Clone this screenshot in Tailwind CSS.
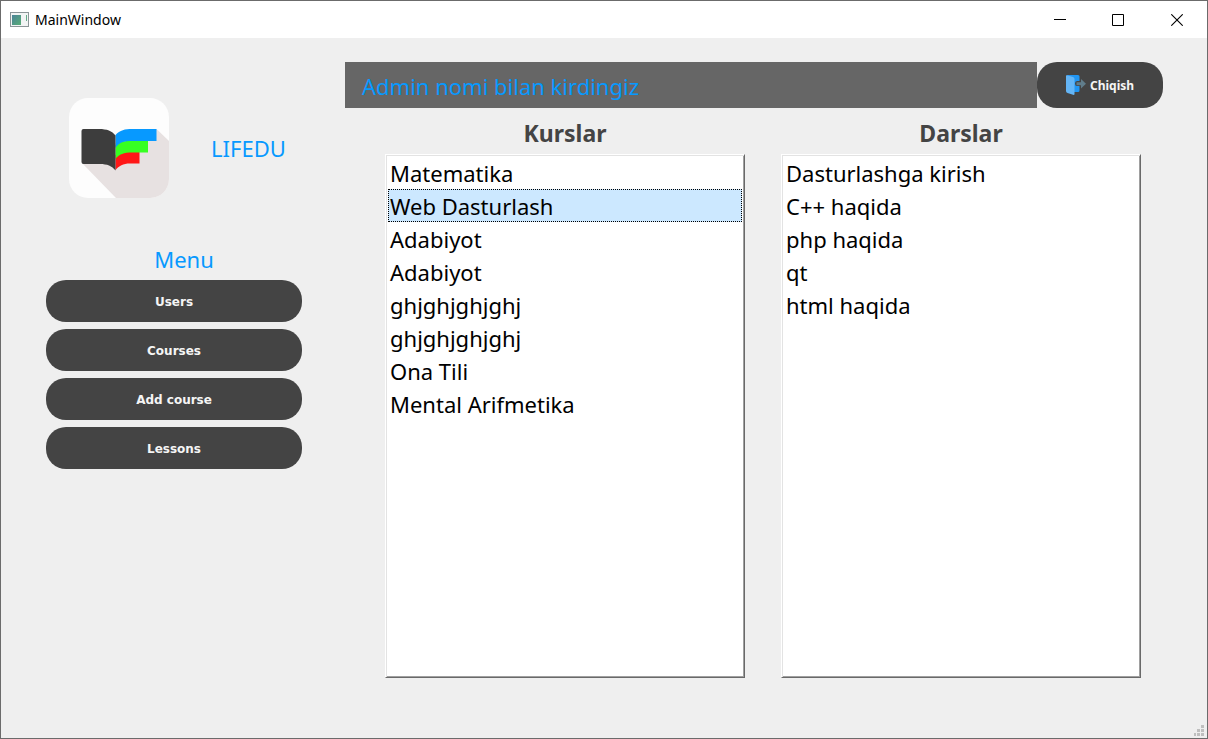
<!DOCTYPE html>
<html lang="uz">
<head>
<meta charset="utf-8">
<title>MainWindow</title>
<script src="https://cdn.jsdelivr.net/npm/@tailwindcss/browser@4"></script>
</head>
<body class="flex min-h-screen flex-col border border-[#6b6b6b] bg-[#efefef] font-['Noto_Sans','Open_Sans',sans-serif] text-black">
<header class="flex h-[37px] items-center bg-white pl-[9px]">
  <svg class="h-4 w-5" viewBox="0 0 20 16" aria-hidden="true">
    <defs><linearGradient id="pane" x1="0" y1="0" x2="1" y2="1"><stop offset="0" stop-color="#4b8398"/><stop offset="1" stop-color="#58ad76"/></linearGradient></defs>
    <rect x=".5" y=".5" width="18" height="14" fill="#f2f4f4" stroke="#8c9598"/>
    <rect x="2" y="3" width="9" height="10" fill="url(#pane)"/>
    <rect x="16" y="3" width="1" height="6" fill="#64aa88"/>
  </svg>
  <h1 class="ml-[5px] flex-1 text-sm">MainWindow</h1>
  <button class="grid h-full w-[58px] place-items-center" aria-label="Minimize"><svg class="size-3" viewBox="0 0 12 12"><path d="M0 5.5H12" stroke="#000"/></svg></button>
  <button class="grid h-full w-[58px] place-items-center" aria-label="Maximize"><svg class="size-3" viewBox="0 0 12 12"><path d="M.5 .5H11.5V11.5H.5Z" fill="none" stroke="#000"/></svg></button>
  <button class="grid h-full w-[60px] place-items-center" aria-label="Close"><svg class="size-3" viewBox="0 0 12 12"><path d="M.3 .3L11.7 11.7M11.7 .3L.3 11.7" stroke="#000" stroke-width="1.1"/></svg></button>
</header>
<div class="flex flex-1 gap-[43px] pt-6 pr-11 pl-[45px]">
  <aside class="w-64 pt-9">
    <div class="flex items-center pl-[23px]">
      <svg class="size-[100px]" viewBox="0 0 100 100" role="img" aria-label="LIFEDU">
        <rect width="100" height="100" rx="19" fill="#fdfdfd"/>
        <path d="M13 65L47 100H81A19 19 0 0 0 100 81V43L87.500 31L47 45Z" fill="#e7e1e1"/>
        <path d="M46.500 57C50 54 55 54 60 54H70.500V65.500H61C54 65.500 50 68 46.500 72Z" fill="#ff1717"/>
        <path d="M46.500 47C51 43 56 43 62 43H79V54.500H63C55 54.500 50 56 46.500 61Z" fill="#37ff22"/>
        <path d="M46.500 37C51 32 56 31 63 31H87.500V43H63C55 43 50 44 46.500 50Z" fill="#0799ff"/>
        <path d="M14.500 31H30C38 31 43 33 46.500 37.500V72.500C43 68 38 66 31 66H14.500Q12.500 66 12.500 64V33Q12.500 31 14.500 31Z" fill="#3d3d3d"/>
      </svg>
      <p class="ml-[42px] text-[22px] leading-8 text-[#0799ff]">LIFEDU</p>
    </div>
    <nav aria-labelledby="menu" class="mt-[45px]">
      <h2 id="menu" class="pl-5 text-center text-[22px] leading-8 text-[#0799ff]">Menu</h2>
      <div class="mt-[5px] flex flex-col gap-[7px] font-['DejaVu_Sans',sans-serif] text-xs font-bold text-[#f5f5f5]">
        <button class="h-[42px] rounded-[20px] bg-[#444] pt-px">Users</button>
        <button class="h-[42px] rounded-[20px] bg-[#444] pt-px">Courses</button>
        <button class="h-[42px] rounded-[20px] bg-[#444] pt-px">Add course</button>
        <button class="h-[42px] rounded-[20px] bg-[#444] pt-px">Lessons</button>
      </div>
    </nav>
  </aside>
  <main class="flex flex-1 flex-col pb-[60px]">
    <div class="flex h-[46px]">
      <p class="flex flex-1 items-center bg-[#666] pt-[3px] pl-[17px] text-[22px] text-[#0799ff]">Admin nomi bilan kirdingiz</p>
      <button class="flex w-[126px] items-center justify-center gap-1 rounded-[20px] bg-[#444] text-xs font-bold text-[#f5f5f5]">
        <svg class="size-5" viewBox="0 0 20 20" aria-hidden="true">
          <path d="M1 0H12Q13.500 0 13.500 1.500V6H11Q9 6 9 8.500Q9 11 11 11H13.500V15.500Q13.500 17 12 17H8Z" fill="#2196f3"/>
          <path d="M0 .7Q0 0 1 .2L7 2Q8.500 2.500 8.500 4V19Q8.500 20.300 7 19.800L1.500 18Q0 17.500 0 16Z" fill="#64b5f6"/>
          <path d="M10.500 7.200H15V4L20 8.700L15 13.500V10.200H10.500Z" fill="#607d8b"/>
        </svg>
        <span class="pt-px">Chiqish</span>
      </button>
    </div>
    <div class="grid flex-1 grid-cols-2 gap-9 pr-[22px] pl-10">
      <section class="flex flex-col" aria-labelledby="courses">
        <h2 id="courses" class="h-[46px] pt-[9px] text-center text-[23px] leading-8 font-bold text-[#444]">Kurslar</h2>
        <ul role="listbox" aria-labelledby="courses" class="flex-1 border border-t-white border-r-[#696969] border-b-[#696969] border-l-white bg-white px-0.5 pt-px text-[22px] leading-[35px] shadow-[inset_1px_1px_0_#e3e3e3,inset_-1px_-1px_0_#a0a0a0]">
          <li role="option" aria-selected="false" class="h-[33px] px-0.5">Matematika</li>
          <li role="option" aria-selected="true" class="h-[33px] bg-[#cce8ff] px-0.5 outline-1 -outline-offset-1 outline-dotted outline-black">Web Dasturlash</li>
          <li role="option" aria-selected="false" class="h-[33px] px-0.5">Adabiyot</li>
          <li role="option" aria-selected="false" class="h-[33px] px-0.5">Adabiyot</li>
          <li role="option" aria-selected="false" class="h-[33px] px-0.5">ghjghjghjghj</li>
          <li role="option" aria-selected="false" class="h-[33px] px-0.5">ghjghjghjghj</li>
          <li role="option" aria-selected="false" class="h-[33px] px-0.5">Ona Tili</li>
          <li role="option" aria-selected="false" class="h-[33px] px-0.5">Mental Arifmetika</li>
        </ul>
      </section>
      <section class="flex flex-col" aria-labelledby="lessons">
        <h2 id="lessons" class="h-[46px] pt-[9px] text-center text-[23px] leading-8 font-bold text-[#444]">Darslar</h2>
        <ul role="listbox" aria-labelledby="lessons" class="flex-1 border border-t-white border-r-[#696969] border-b-[#696969] border-l-white bg-white px-0.5 pt-px text-[22px] leading-[35px] shadow-[inset_1px_1px_0_#e3e3e3,inset_-1px_-1px_0_#a0a0a0]">
          <li role="option" aria-selected="false" class="h-[33px] px-0.5">Dasturlashga kirish</li>
          <li role="option" aria-selected="false" class="h-[33px] px-0.5">C++ haqida</li>
          <li role="option" aria-selected="false" class="h-[33px] px-0.5">php haqida</li>
          <li role="option" aria-selected="false" class="h-[33px] px-0.5">qt</li>
          <li role="option" aria-selected="false" class="h-[33px] px-0.5">html haqida</li>
        </ul>
      </section>
    </div>
  </main>
</div>
<svg class="absolute right-1 bottom-[3px] h-[11px] w-[10px]" viewBox="0 0 10 11" fill="#bfbfbf" aria-hidden="true"><path d="M7 0h3v3H7zM3 4h3v3H3zM7 4h3v3H7zM0 8h2v3H0zM3 8h3v3H3zM7 8h3v3H7z"/></svg>
</body>
</html>
